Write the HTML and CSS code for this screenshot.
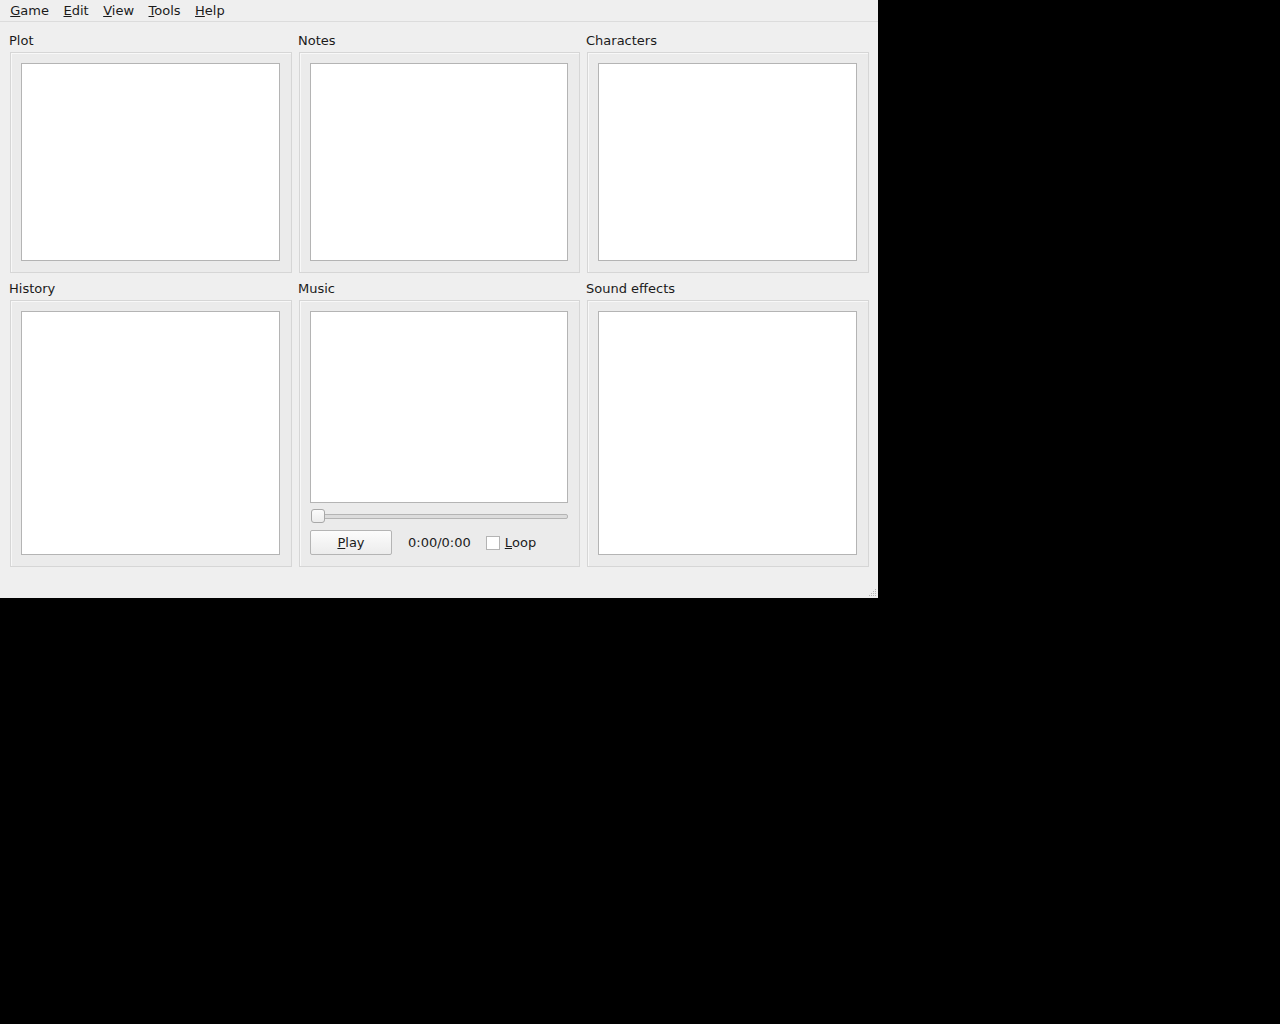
FILE: index.html
```html
<!DOCTYPE html>
<html>
<head>
<meta charset="utf-8">
<link rel="stylesheet" href="styles.css">
</head>
<body>
<div class="window">
  <div class="menubar">
    <span class="menu"><u>G</u>ame</span>
    <span class="menu"><u>E</u>dit</span>
    <span class="menu"><u>V</u>iew</span>
    <span class="menu"><u>T</u>ools</span>
    <span class="menu"><u>H</u>elp</span>
  </div>
  <div class="grid">
    <section class="group row1">
      <div class="title">Plot</div>
      <div class="frame"><div class="textbox"></div></div>
    </section>
    <section class="group row1">
      <div class="title">Notes</div>
      <div class="frame"><div class="textbox"></div></div>
    </section>
    <section class="group row1">
      <div class="title">Characters</div>
      <div class="frame"><div class="textbox"></div></div>
    </section>
    <section class="group row2">
      <div class="title">History</div>
      <div class="frame"><div class="textbox"></div></div>
    </section>
    <section class="group row2">
      <div class="title">Music</div>
      <div class="frame music">
        <div class="textbox"></div>
        <div class="slider"><div class="groove"></div><div class="handle"></div></div>
        <div class="controls">
          <button class="btn"><u>P</u>lay</button>
          <span class="time">0:00/0:00</span>
          <span class="check"><span class="box"></span><u>L</u>oop</span>
        </div>
      </div>
    </section>
    <section class="group row2">
      <div class="title">Sound effects</div>
      <div class="frame"><div class="textbox"></div></div>
    </section>
  </div>
  <div class="grip">
    <svg width="8" height="8" viewBox="0 0 8 8">
      <g fill="#b8b8b8">
        <rect x="6" y="0" width="1" height="1"/>
        <rect x="4" y="2" width="1" height="1"/><rect x="6" y="2" width="1" height="1"/>
        <rect x="2" y="4" width="1" height="1"/><rect x="4" y="4" width="1" height="1"/><rect x="6" y="4" width="1" height="1"/>
        <rect x="0" y="6" width="1" height="1"/><rect x="2" y="6" width="1" height="1"/><rect x="4" y="6" width="1" height="1"/><rect x="6" y="6" width="1" height="1"/>
      </g>
    </svg>
  </div>
</div>
</body>
</html>
```
FILE: styles.css
```css
html, body {
  margin: 0;
  padding: 0;
  background: #000;
}
.window {
  position: relative;
  width: 878px;
  height: 598px;
  background: #efefef;
  font-family: "DejaVu Sans", sans-serif;
  font-size: 13px;
  color: #1b1b1b;
  overflow: hidden;
}
.menubar {
  display: flex;
  padding: 1px 0 0 3px;
  border-bottom: 1px solid #dcdcdc;
  box-sizing: content-box;
  height: 20px;
}
.menu {
  line-height: 19px;
  padding: 0 7.25px;
}
.grid {
  display: grid;
  grid-template-columns: 283px 282px 283px;
  grid-template-rows: 242px 288px;
  column-gap: 6px;
  row-gap: 6px;
  padding: 9px 0 0 9px;
}
.group {
  display: flex;
  flex-direction: column;
}
.title {
  line-height: 19px;
  height: 19px;
  margin-bottom: 2px;
}
.frame {
  flex: 1;
  margin-left: 1px;
  border: 1px solid #d6d6d6;
  box-shadow: inset 1px 1px 0 #f8f8f8;
  background: #ebebeb;
  padding: 10px 11px 11px 10px;
  display: flex;
  flex-direction: column;
}
.textbox {
  flex: 1;
  background: #fff;
  border: 1px solid #b4b4b4;
}
.slider {
  position: relative;
  height: 14px;
  margin: 6px 0 7px 0;
}
.groove {
  position: absolute;
  left: 1px;
  right: 0;
  top: 5px;
  height: 3px;
  border: 1px solid #b4b4b4;
  border-radius: 2px;
  background: #dcdcdc;
}
.handle {
  position: absolute;
  left: 1px;
  top: 0;
  width: 12px;
  height: 12px;
  border: 1px solid #a8a8a8;
  border-radius: 3px;
  background: linear-gradient(#fbfbfb, #ececec);
}
.controls {
  display: flex;
  align-items: center;
  height: 25px;
}
.btn {
  width: 82px;
  height: 25px;
  border: 1px solid #b4b4b4;
  border-radius: 2px;
  background: linear-gradient(#fcfcfc, #ececec);
  font: inherit;
  color: inherit;
  padding: 0;
  margin-right: 16px;
}
.time {
  margin-right: 15px;
}
.check {
  display: flex;
  align-items: center;
}
.box {
  width: 12px;
  height: 12px;
  border: 1px solid #b4b4b4;
  background: #fff;
  margin-right: 5px;
}
.grip {
  position: absolute;
  right: 1px;
  bottom: 1px;
  width: 8px;
  height: 8px;
}
.grip svg { display: block; }
```
